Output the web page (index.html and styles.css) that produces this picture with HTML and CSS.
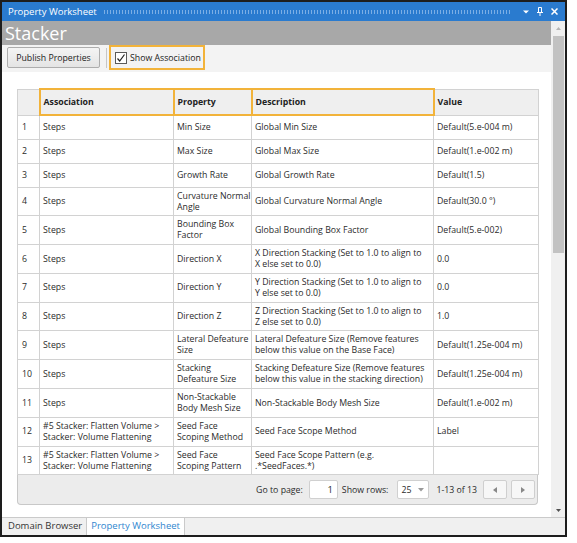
FILE: index.html
```html
<!DOCTYPE html>
<html lang="en">
<head>
  <meta charset="UTF-8">
  <title>Property Worksheet</title>
  <link rel="stylesheet" href="styles.css">
</head>
<body>

<div class="window">
  <div class="titlebar">
    <span class="title">Property Worksheet</span>
    <span class="grip"></span>
    <svg class="ticon" width="6" height="6" viewBox="0 0 6 6"><path d="M0 1.5h6L3 4.5z" fill="#fff"/></svg>
    <svg class="ticon" width="6" height="9" viewBox="0 0 6 9"><path d="M1.5 0.5h3v5h-3z M0 5.5h6 M3 6v3" stroke="#fff" fill="none"/></svg>
    <svg class="ticon" width="7" height="7" viewBox="0 0 7 7"><path d="M0.5 0.5l6 6M6.5 0.5l-6 6" stroke="#fff" stroke-width="1.5"/></svg>
  </div>

  <div class="body">
    <div class="main">
      <div class="panel-head">Stacker</div>

      <div class="toolbar">
        <button class="btn">Publish Properties</button>
        <span class="sep"></span>
        <label class="check highlight">
          <span class="box">
            <svg width="10" height="10" viewBox="0 0 10 10"><path d="M1.5 5.5l2.2 2.5L8.5 1.5" stroke="#222" stroke-width="1.2" fill="none"/></svg>
          </span>
          Show Association
        </label>
      </div>

      <div class="content">
        <div class="grid">
          <table class="sheet">
            <colgroup>
              <col class="c-num">
              <col class="c-assoc">
              <col class="c-prop">
              <col class="c-desc">
              <col class="c-val">
            </colgroup>
            <thead>
              <tr>
                <th></th>
                <th class="hl">Association</th>
                <th class="hl">Property</th>
                <th class="hl">Description</th>
                <th>Value</th>
              </tr>
            </thead>
            <tbody>
              <tr><td>1</td><td>Steps</td><td>Min Size</td><td>Global Min Size</td><td>Default(5.e-004 m)</td></tr>
              <tr><td>2</td><td>Steps</td><td>Max Size</td><td>Global Max Size</td><td>Default(1.e-002 m)</td></tr>
              <tr><td>3</td><td>Steps</td><td>Growth Rate</td><td>Global Growth Rate</td><td>Default(1.5)</td></tr>
              <tr><td>4</td><td>Steps</td><td>Curvature Normal<br>Angle</td><td>Global Curvature Normal Angle</td><td>Default(30.0 °)</td></tr>
              <tr><td>5</td><td>Steps</td><td>Bounding Box<br>Factor</td><td>Global Bounding Box Factor</td><td>Default(5.e-002)</td></tr>
              <tr><td>6</td><td>Steps</td><td>Direction X</td><td>X Direction Stacking (Set to 1.0 to align to<br>X else set to 0.0)</td><td>0.0</td></tr>
              <tr><td>7</td><td>Steps</td><td>Direction Y</td><td>Y Direction Stacking (Set to 1.0 to align to<br>Y else set to 0.0)</td><td>0.0</td></tr>
              <tr><td>8</td><td>Steps</td><td>Direction Z</td><td>Z Direction Stacking (Set to 1.0 to align to<br>Z else set to 0.0)</td><td>1.0</td></tr>
              <tr><td>9</td><td>Steps</td><td>Lateral Defeature<br>Size</td><td>Lateral Defeature Size (Remove features<br>below this value on the Base Face)</td><td>Default(1.25e-004 m)</td></tr>
              <tr><td>10</td><td>Steps</td><td>Stacking<br>Defeature Size</td><td>Stacking Defeature Size (Remove features<br>below this value in the stacking direction)</td><td>Default(1.25e-004 m)</td></tr>
              <tr><td>11</td><td>Steps</td><td>Non-Stackable<br>Body Mesh Size</td><td>Non-Stackable Body Mesh Size</td><td>Default(1.e-002 m)</td></tr>
              <tr><td>12</td><td>#5 Stacker: Flatten Volume &gt;<br>Stacker: Volume Flattening</td><td>Seed Face<br>Scoping Method</td><td>Seed Face Scope Method</td><td>Label</td></tr>
              <tr><td>13</td><td>#5 Stacker: Flatten Volume &gt;<br>Stacker: Volume Flattening</td><td>Seed Face<br>Scoping Pattern</td><td>Seed Face Scope Pattern (e.g.<br>.*SeedFaces.*)</td><td></td></tr>
            </tbody>
          </table>

          <div class="pager">
            <span>Go to page:</span>
            <span class="page-input">1</span>
            <span class="rows-label">Show rows:</span>
            <span class="rows-select">25
              <svg width="6" height="4" viewBox="0 0 6 4"><path d="M0 0h6L3 3.5z" fill="#9a9a9a"/></svg>
            </span>
            <span class="range">1-13 of 13</span>
            <span class="nav prev">
              <svg width="4" height="6" viewBox="0 0 4 6"><path d="M4 0v6L0 3z" fill="#888"/></svg>
            </span>
            <span class="nav next">
              <svg width="4" height="6" viewBox="0 0 4 6"><path d="M0 0v6l4-3z" fill="#888"/></svg>
            </span>
          </div>
        </div>
      </div>
    </div>

    <div class="scrollbar">
      <span class="arrow">
        <svg width="5" height="3" viewBox="0 0 5 3"><path d="M0 3h5L2.5 0z" fill="#b5b5b5"/></svg>
      </span>
      <div class="thumb"></div>
      <span class="arrow down">
        <svg width="5" height="3" viewBox="0 0 5 3"><path d="M0 0h5L2.5 3z" fill="#505050"/></svg>
      </span>
    </div>
  </div>

  <div class="tabs">
    <span class="tab">Domain Browser</span>
    <span class="tab active">Property Worksheet</span>
  </div>
</div>

</body>
</html>
```

FILE: styles.css
```css
* {
  box-sizing: border-box;
}

body {
  margin: 0;
  background: #ffffff;
  font-family: "Open Sans", "Noto Sans", sans-serif;
  font-size: 8.75px;
  color: #2b2b2b;
}

.window {
  width: 567px;
  height: 537px;
  border: 2px solid #1d1d1d;
  display: flex;
  flex-direction: column;
}

/* title bar */
.titlebar {
  height: 19px;
  background: #2a7bcf;
  color: #fff;
  display: flex;
  align-items: center;
  padding: 0 7px 0 6px;
}

.title {
  font-size: 9.5px;
}

.grip {
  flex: 1;
  height: 4px;
  margin: 0 4px 0 6px;
  background-image: radial-gradient(circle, rgba(190, 218, 248, 0.55) 0.5px, transparent 0.8px);
  background-size: 3px 2px;
}

.ticon {
  margin-left: 8px;
}

/* body */
.body {
  flex: 1;
  display: flex;
  min-height: 0;
}

.main {
  flex: 1;
  display: flex;
  flex-direction: column;
  overflow: hidden;
  background: #fff;
}

.panel-head {
  height: 24px;
  background: #a8a8a8;
  color: #fff;
  font-size: 18px;
  line-height: 24px;
  padding-left: 3px;
}

.toolbar {
  height: 27px;
  background: #f3f3f3;
  display: flex;
  align-items: flex-start;
  padding-left: 5px;
}

.btn {
  margin-top: 2px;
  width: 93px;
  height: 21px;
  padding: 0;
  border: 1px solid #adadad;
  border-radius: 2px;
  background: linear-gradient(#f4f4f4, #e4e4e4);
  font-family: inherit;
  font-size: 8.75px;
  color: #222;
}

.sep {
  margin: 3px 0 0 6px;
  width: 1px;
  height: 20px;
  background: #c6c6c6;
}

.highlight {
  margin-left: 2px;
  width: 96px;
  height: 25px;
  border: 2px solid #f2b33a;
}

.check {
  display: flex;
  align-items: center;
  gap: 3px;
  padding-left: 4px;
  color: #222;
}

.box {
  width: 12px;
  height: 12px;
  border: 1px solid #5a5a5a;
  background: #fff;
  display: flex;
  align-items: center;
  justify-content: center;
}

/* grid */
.content {
  flex: 1;
  padding: 16px 0 0 15px;
}

.grid {
  width: 521px;
}

.sheet {
  width: 521px;
  table-layout: fixed;
  border-collapse: collapse;
  border: 1px solid #c8c8c8;
}

.c-num { width: 22px; }
.c-assoc { width: 134px; }
.c-prop { width: 78px; }
.c-desc { width: 182px; }
.c-val { width: 105px; }

.sheet th {
  height: 26px;
  background: #efefef;
  border: 1px solid #d2d2d2;
  text-align: left;
  font-weight: 700;
  color: #222;
  padding: 0 3px;
}

.sheet th.hl {
  border: 2px solid #f2b33a;
}

.sheet td {
  height: 24px;
  padding: 3px 3px 2.8px;
  line-height: 11px;
  border: 1px solid #d2d2d2;
  white-space: nowrap;
  overflow: hidden;
  vertical-align: middle;
}

.sheet td:first-child {
  padding-left: 4px;
}

.pager {
  height: 30px;
  background: #ececec;
  border: 1px solid #c8c8c8;
  border-top: none;
  border-radius: 0 0 4px 4px;
  display: flex;
  align-items: center;
  justify-content: flex-end;
  padding-right: 2px;
}

.page-input {
  width: 29px;
  height: 19px;
  margin-left: 6px;
  border: 1px solid #d0d0d0;
  border-radius: 2px;
  background: #fff;
  text-align: right;
  padding-right: 4px;
  line-height: 17px;
  font-size: 9.5px;
}

.rows-label {
  margin-left: 4px;
}

.rows-select {
  width: 32px;
  height: 19px;
  margin-left: 9px;
  border: 1px solid #d0d0d0;
  border-radius: 2px;
  background: #fff;
  display: flex;
  align-items: center;
  justify-content: space-between;
  padding: 0 4px 0 3px;
}

.range {
  margin-left: 7px;
}

.nav {
  width: 24px;
  height: 19px;
  border: 1px solid #cfcfcf;
  border-radius: 2px;
  background: #f7f7f7;
  display: flex;
  align-items: center;
  justify-content: center;
}

.prev {
  margin-left: 6px;
}

.next {
  margin-left: 4px;
}

/* scrollbar */
.scrollbar {
  width: 14px;
  background: #f0f0f0;
  display: flex;
  flex-direction: column;
  padding-left: 2px;
}

.arrow {
  height: 14px;
  width: 11px;
  display: flex;
  align-items: center;
  justify-content: center;
}

.arrow.down {
  margin-top: auto;
}

.thumb {
  margin-top: 1px;
  width: 11px;
  height: 217px;
  background: #c2c2c2;
}

/* bottom tabs */
.tabs {
  height: 18px;
  border-top: 1px solid #cacaca;
  background: #f0f0f0;
  display: flex;
  font-size: 9.5px;
}

.tab {
  line-height: 16px;
  padding: 0 4px 0 6px;
  color: #333;
}

.tab.active {
  background: #fff;
  color: #2f86cf;
  border-left: 1px solid #cacaca;
  border-right: 1px solid #cacaca;
  padding: 0 4px 0 4px;
}
```
